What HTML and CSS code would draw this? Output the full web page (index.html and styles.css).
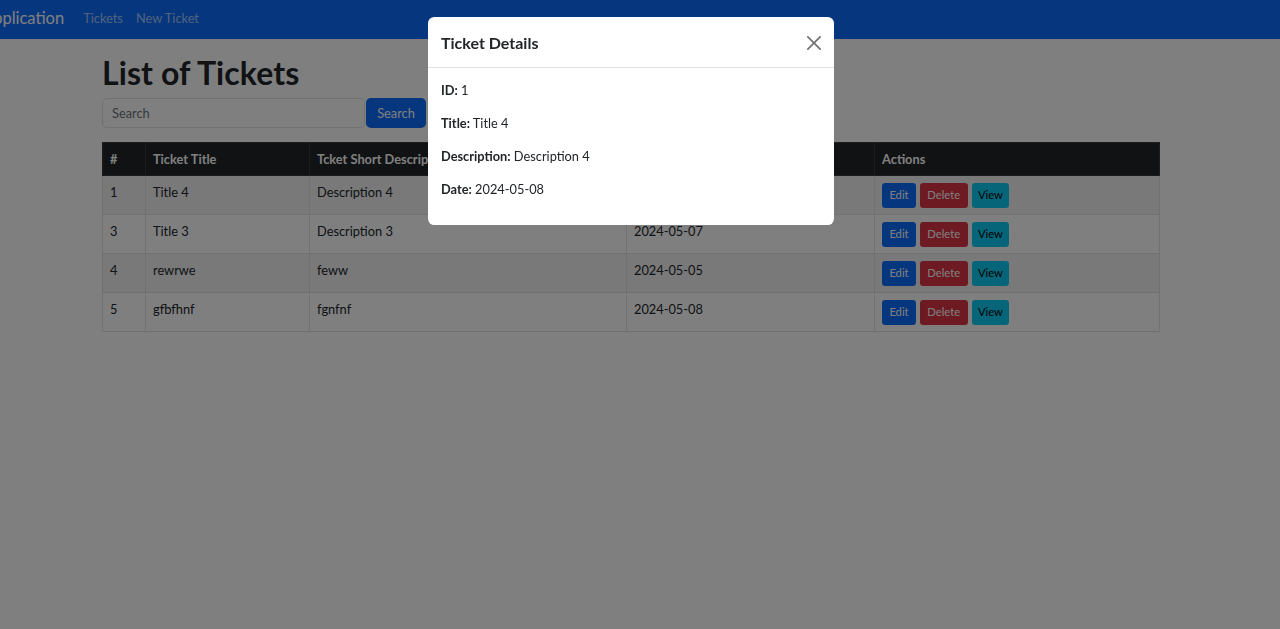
FILE: index.html
```html
<!DOCTYPE html>
<html lang="en">
<head>
<meta charset="utf-8">
<title>Tickets</title>
<link rel="stylesheet" href="styles.css">
</head>
<body>
<nav class="navbar">
  <a class="brand" href="#">Application</a>
  <a class="nav-link" href="#">Tickets</a>
  <a class="nav-link" href="#">New Ticket</a>
</nav>
<main class="container">
  <h1 class="page-title">List of Tickets</h1>
  <form class="search">
    <input class="search-input" type="text" placeholder="Search">
    <button class="btn btn-primary search-btn" type="button">Search</button>
  </form>
  <table class="table">
    <colgroup>
      <col class="c-id"><col class="c-title"><col class="c-desc"><col class="c-date"><col class="c-act">
    </colgroup>
    <thead>
      <tr><th>#</th><th>Ticket Title</th><th>Tcket Short Description</th><th>Date</th><th>Actions</th></tr>
    </thead>
    <tbody>
      <tr class="odd"><td>1</td><td>Title 4</td><td>Description 4</td><td>2024-05-08</td>
        <td><div class="actions"><button class="btn btn-sm btn-primary">Edit</button><button class="btn btn-sm btn-danger">Delete</button><button class="btn btn-sm btn-info">View</button></div></td></tr>
      <tr><td>3</td><td>Title 3</td><td>Description 3</td><td>2024-05-07</td>
        <td><div class="actions"><button class="btn btn-sm btn-primary">Edit</button><button class="btn btn-sm btn-danger">Delete</button><button class="btn btn-sm btn-info">View</button></div></td></tr>
      <tr class="odd"><td>4</td><td>rewrwe</td><td>feww</td><td>2024-05-05</td>
        <td><div class="actions"><button class="btn btn-sm btn-primary">Edit</button><button class="btn btn-sm btn-danger">Delete</button><button class="btn btn-sm btn-info">View</button></div></td></tr>
      <tr><td>5</td><td>gfbfhnf</td><td>fgnfnf</td><td>2024-05-08</td>
        <td><div class="actions"><button class="btn btn-sm btn-primary">Edit</button><button class="btn btn-sm btn-danger">Delete</button><button class="btn btn-sm btn-info">View</button></div></td></tr>
    </tbody>
  </table>
</main>

<div class="backdrop"></div>
<div class="modal">
  <div class="modal-dialog">
    <div class="modal-header">
      <h5 class="modal-title">Ticket Details</h5>
      <button class="btn-close" type="button" aria-label="Close">
        <svg viewBox="0 0 16 16" width="14" height="14"><path d="M.293.293a1 1 0 0 1 1.414 0L8 6.586 14.293.293a1 1 0 1 1 1.414 1.414L9.414 8l6.293 6.293a1 1 0 0 1-1.414 1.414L8 9.414l-6.293 6.293a1 1 0 0 1-1.414-1.414L6.586 8 .293 1.707a1 1 0 0 1 0-1.414z"/></svg>
      </button>
    </div>
    <div class="modal-body">
      <p><strong>ID:</strong> 1</p>
      <p><strong>Title:</strong> Title 4</p>
      <p><strong>Description:</strong> Description 4</p>
      <p><strong>Date:</strong> 2024-05-08</p>
    </div>
  </div>
</div>
</body>
</html>
```

FILE: styles.css
```css
* { box-sizing: border-box; }
html, body { height: 100%; }
body {
  margin: 0;
  padding-right: 19px;
  font-family: Lato, "Open Sans", sans-serif;
  font-size: 12.8px;
  line-height: 1.5;
  color: #212529;
  background: #fff;
  overflow: hidden;
}

.navbar {
  height: 39px;
  background: #0d6efd;
  display: flex;
  align-items: center;
  padding-bottom: 4px;
  margin-right: -19px;
}
.brand {
  color: #fff;
  font-size: 16.5px;
  line-height: 24px;
  text-decoration: none;
  margin-left: -18px;
  margin-right: 19px;
}
.nav-link {
  color: rgba(255,255,255,.62);
  text-decoration: none;
  font-size: 12.8px;
  line-height: 24px;
  margin-right: 13px;
}

.container {
  width: 1057px;
  margin: 0 auto;
}
.page-title {
  margin: 15px 0 6px;
  font-size: 32px;
  font-weight: 700;
  line-height: 38.4px;
  letter-spacing: 0.1px;
}

.search {
  display: flex;
  gap: 1px;
  margin-bottom: 14px;
}
.search-input {
  width: 263px;
  height: 30px;
  border: 1px solid #dee2e6;
  border-radius: 4.8px;
  padding: 0 9px;
  font: inherit;
  color: #212529;
}
.search-input::placeholder { color: #6c757d; }
.search-btn {
  width: 60px;
  height: 30px;
  font-size: 12.8px;
  border-radius: 4.8px;
}

.btn {
  font-family: inherit;
  border: 1px solid transparent;
  cursor: pointer;
  line-height: 1.5;
  padding: 0;
}
.btn-primary { background: #0d6efd; color: #fff; }
.btn-danger { background: #dc3545; color: #fff; }
.btn-info { background: #0dcaf0; color: #000; }
.btn-sm {
  font-size: 11.2px;
  padding: 3.2px 6.4px;
  border-radius: 3.2px;
}
.btn-sm.btn-info { padding: 3.2px 5.4px; }

.table {
  width: 100%;
  border-collapse: collapse;
  table-layout: fixed;
}
.c-id { width: 43px; }
.c-title { width: 164px; }
.c-desc { width: 317px; }
.c-date { width: 248px; }
.c-act { width: 285px; }
.table th, .table td {
  border: 1px solid #dee2e6;
  padding: 6.4px 7px;
  text-align: left;
  vertical-align: top;
}
.table thead th {
  background: #212529;
  color: #fff;
  border-color: #373b3e;
  font-weight: 700;
}
.table tbody td { height: 39px; padding-top: 6.9px; padding-bottom: 5.9px; }
.table tbody tr.odd td { background: #f2f2f2; }
.actions { display: flex; gap: 4px; }

.backdrop {
  position: fixed;
  inset: 0;
  background: rgba(0,0,0,.5);
}
.modal {
  position: fixed;
  inset: 0;
  padding-right: 19px;
  display: flex;
  justify-content: center;
  align-items: flex-start;
}
.modal-dialog {
  width: 406px;
  margin-top: 17px;
  background: #fff;
  border-radius: 6.4px;
  overflow: hidden;
}
.modal-header {
  display: flex;
  align-items: center;
  padding: 13.5px 12.8px 12.5px 13.5px;
  border-bottom: 1px solid #dee2e6;
}
.modal-title {
  margin: 0;
  font-size: 16px;
  font-weight: 700;
  line-height: 1.5;
}
.btn-close {
  margin-left: auto;
  width: 20px;
  height: 20px;
  padding: 3px;
  margin-right: -3.5px;
  border: 0;
  background: transparent;
  opacity: .55;
  display: flex;
  align-items: center;
  justify-content: center;
  cursor: pointer;
}
.btn-close svg { fill: #000; }
.modal-body {
  padding: 13.4px 12.8px 12px 13.5px;
}
.modal-body p { margin: 0 0 13.8px; line-height: 19.2px; }
.modal-body strong { font-weight: 700; }
```
